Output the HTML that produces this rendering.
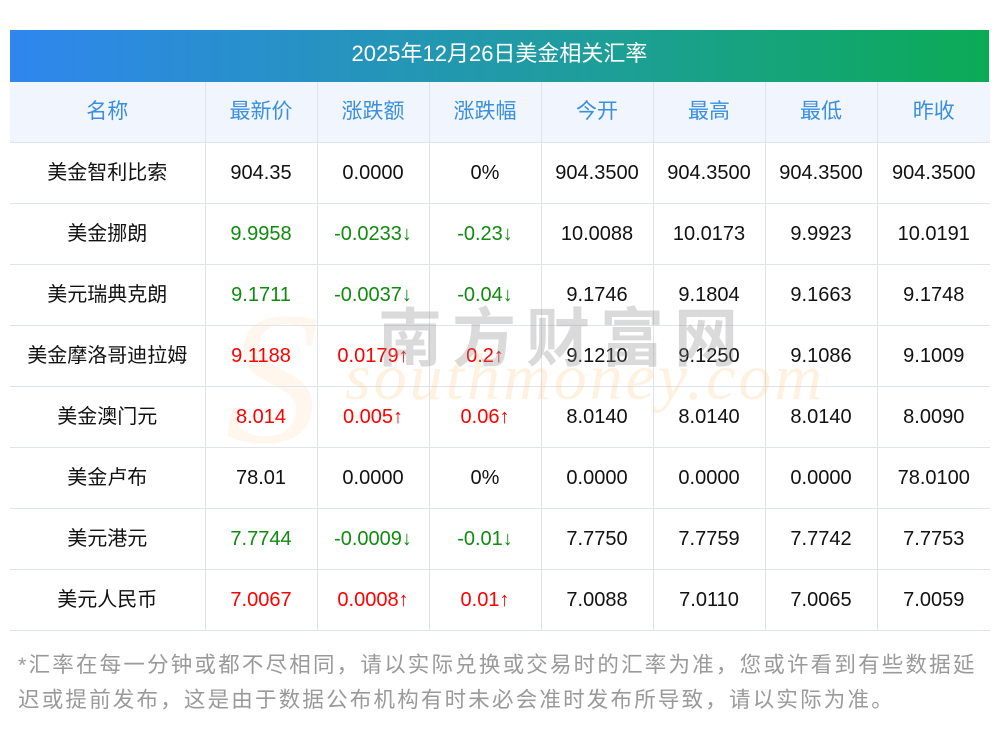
<!DOCTYPE html><html><head><meta charset="utf-8"><style>
body{margin:0;background:#fff;width:1000px;height:733px;overflow:hidden;position:relative;font-family:"Liberation Sans","Noto Sans CJK SC",sans-serif}
.t{position:absolute;left:10px;top:30px;width:979px;height:52px;background:linear-gradient(90deg,#2f86ee,#1e9e9a 60%,#0bab55);color:#fff;font-size:22px;text-align:center;line-height:48px}
table{position:absolute;left:10px;top:82px;border-collapse:collapse;width:980px;table-layout:fixed}
td{border:1px solid #dfe3ec;height:60px;text-align:center;font-size:20px;color:#111;padding:0;line-height:20px;overflow:hidden}
tr.h td{background:#f1f6fe;color:#3a8fe0;font-size:21px;border-top:none}
tr td:first-child{border-left:none}
tr td:last-child{border-right:none}
.g{color:#118a11}.r{color:#f00}
.wm1{position:absolute;left:378px;top:288px;font-size:64px;color:rgba(140,140,140,.32);letter-spacing:10px;font-family:"Noto Sans CJK SC",sans-serif;font-weight:bold}
.wm2{position:absolute;left:345px;top:340px;font-size:66px;color:rgba(255,190,110,.22);font-style:italic;font-family:"Liberation Serif",serif;letter-spacing:3px}
.wmS{position:absolute;left:225px;top:270px;font-size:190px;color:rgba(255,190,110,.12);font-style:italic;font-family:"Liberation Serif",serif}
.f{position:absolute;left:18px;top:648px;width:990px;font-size:21.5px;letter-spacing:2.2px;color:#9a9a9a;line-height:35px;white-space:nowrap}
</style></head><body>
<div class="t">2025年12月26日美金相关汇率</div>
<div class="wmS">S</div>
<table>
<col style="width:195px"><col style="width:112px"><col style="width:112px"><col style="width:112px"><col style="width:112px"><col style="width:112px"><col style="width:112px"><col style="width:113px">
<tr class="h"><td>名称</td><td>最新价</td><td>涨跌额</td><td>涨跌幅</td><td>今开</td><td>最高</td><td>最低</td><td>昨收</td></tr>
<tr><td>美金智利比索</td><td>904.35</td><td>0.0000</td><td>0%</td><td>904.3500</td><td>904.3500</td><td>904.3500</td><td>904.3500</td></tr>
<tr><td>美金挪朗</td><td class="g">9.9958</td><td class="g">-0.0233↓</td><td class="g">-0.23↓</td><td>10.0088</td><td>10.0173</td><td>9.9923</td><td>10.0191</td></tr>
<tr><td>美元瑞典克朗</td><td class="g">9.1711</td><td class="g">-0.0037↓</td><td class="g">-0.04↓</td><td>9.1746</td><td>9.1804</td><td>9.1663</td><td>9.1748</td></tr>
<tr><td>美金摩洛哥迪拉姆</td><td class="r">9.1188</td><td class="r">0.0179↑</td><td class="r">0.2↑</td><td>9.1210</td><td>9.1250</td><td>9.1086</td><td>9.1009</td></tr>
<tr><td>美金澳门元</td><td class="r">8.014</td><td class="r">0.005↑</td><td class="r">0.06↑</td><td>8.0140</td><td>8.0140</td><td>8.0140</td><td>8.0090</td></tr>
<tr><td>美金卢布</td><td>78.01</td><td>0.0000</td><td>0%</td><td>0.0000</td><td>0.0000</td><td>0.0000</td><td>78.0100</td></tr>
<tr><td>美元港元</td><td class="g">7.7744</td><td class="g">-0.0009↓</td><td class="g">-0.01↓</td><td>7.7750</td><td>7.7759</td><td>7.7742</td><td>7.7753</td></tr>
<tr><td>美元人民币</td><td class="r">7.0067</td><td class="r">0.0008↑</td><td class="r">0.01↑</td><td>7.0088</td><td>7.0110</td><td>7.0065</td><td>7.0059</td></tr>
</table>
<div class="wm1">南方财富网</div>
<div class="wm2">southmoney.com</div>
<div class="f">*汇率在每一分钟或都不尽相同，请以实际兑换或交易时的汇率为准，您或许看到有些数据延<br>迟或提前发布，这是由于数据公布机构有时未必会准时发布所导致，请以实际为准。</div>
</body></html>
